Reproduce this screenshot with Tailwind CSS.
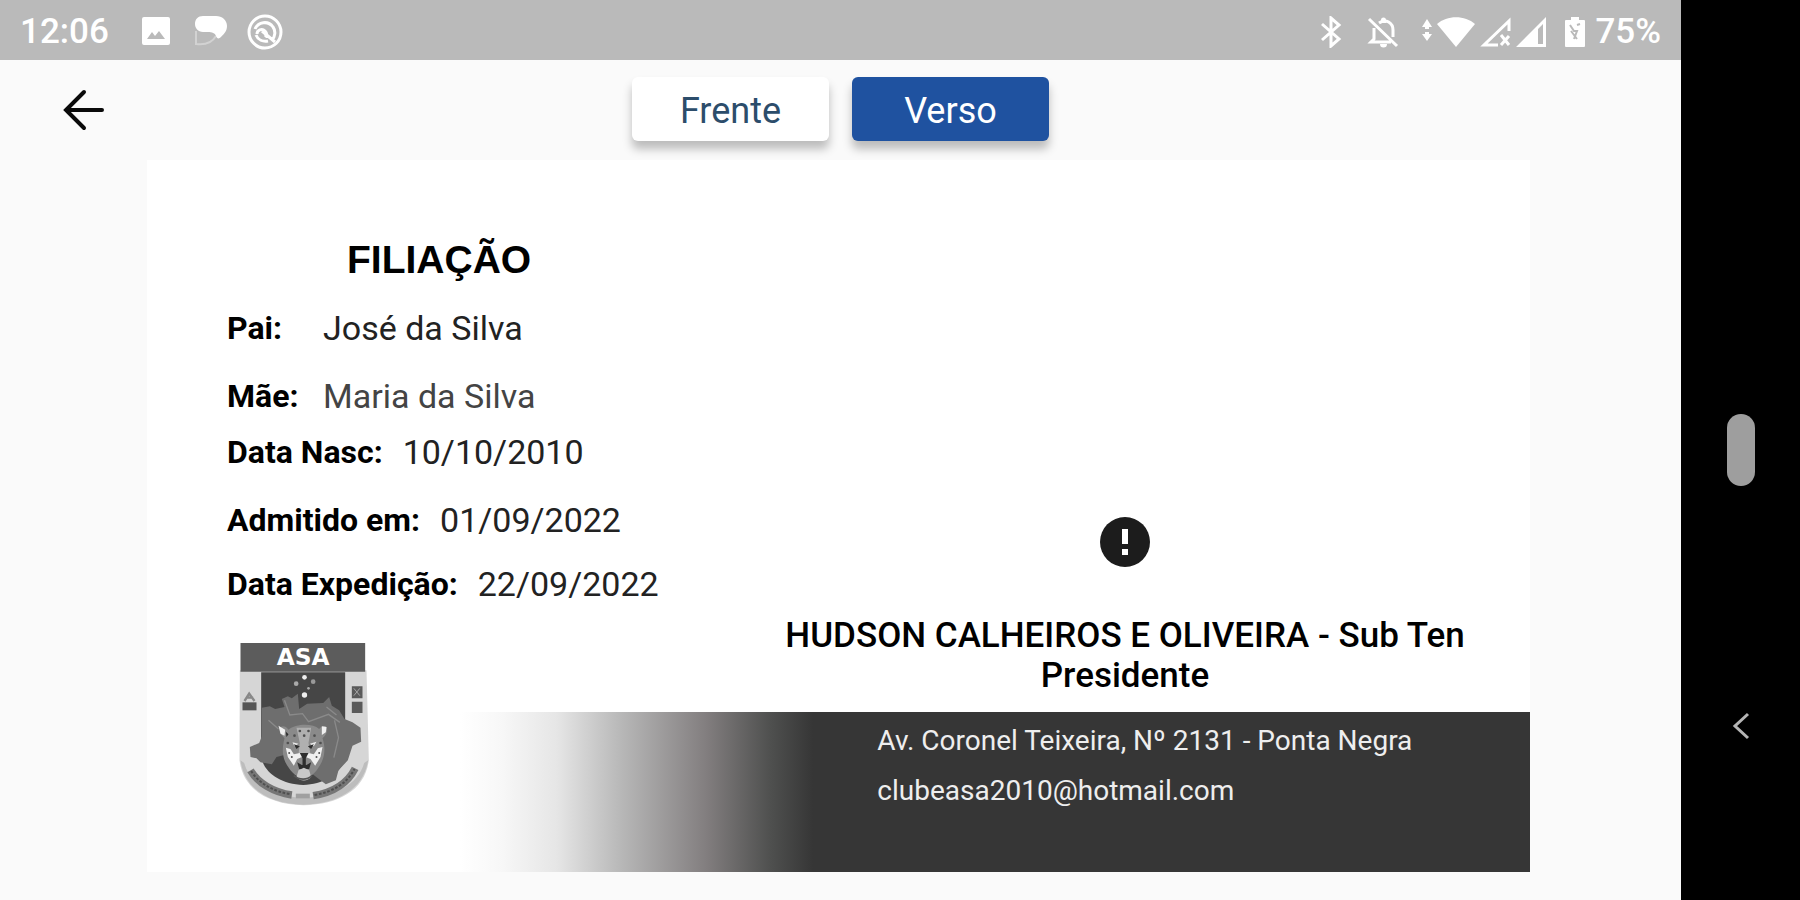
<!DOCTYPE html>
<html lang="pt-BR">
  <head>
    <meta charset="UTF-8" />
    <meta name="viewport" content="width=device-width, initial-scale=1.0" />
    <title>Carteirinha ASA</title>
    <script src="https://cdn.jsdelivr.net/npm/@tailwindcss/browser@4"></script>
  </head>
  <body class="flex min-h-screen bg-[#fafafa] font-[Roboto,sans-serif] text-black">
    <div class="flex flex-1 flex-col">
      <!-- STATUS BAR -->
      <div class="flex h-15 items-center justify-between bg-[#bababa] px-5 pt-1 text-white">
        <div class="flex items-center">
          <span class="text-[35px] leading-10 font-medium">12:06</span>
          <svg class="ml-8 h-8 w-8" viewBox="0 0 32 32" aria-hidden="true">
            <path fill="currentColor" fill-rule="evenodd" d="M3 1h24a2 2 0 0 1 2 2v24a2 2 0 0 1-2 2H3a2 2 0 0 1-2-2V3a2 2 0 0 1 2-2zM6 23h18l-6-8-4 5-3-4z" />
          </svg>
          <svg class="ml-5 h-9 w-9" viewBox="0 0 36 36" aria-hidden="true">
            <path fill="currentColor" d="M10 2h13c6 0 11 4 11 10 0 5-3 8-6 11-2 2-4 2-5-1-1-3-4-4-8-4h-5c-5 0-8-4-8-8 0-5 3-8 8-8z" />
            <path fill="none" stroke="currentColor" stroke-opacity="0.35" stroke-width="2" d="M3 17v13c8 1 16-1 20-8" />
          </svg>
          <svg class="ml-4 h-10 w-10" viewBox="0 0 40 40" fill="none" stroke="currentColor" stroke-width="3" aria-hidden="true">
            <circle cx="20" cy="20" r="16" />
            <path d="M10 17c3-7 13-9 18-2 3 4 2 10-1 13M30 30 17 19M11 23c2 5 7 7 12 6M12 22c0-4 5-6 8-3 2 2 2 4 0 6" />
          </svg>
        </div>
        <div class="flex items-center">
          <svg class="h-8 w-6" viewBox="0 0 24 32" fill="none" stroke="currentColor" stroke-width="3" aria-hidden="true">
            <path d="M3 8 20 23l-8 7V2l8 7L3 24" />
          </svg>
          <svg class="ml-6 h-8 w-8" viewBox="0 0 32 32" fill="none" stroke="currentColor" stroke-width="3" aria-hidden="true">
            <path d="M2 3 30 30M7 12v11L4 26h20M12 7c7-5 14 0 14 7v7" />
            <path fill="currentColor" stroke="none" d="M14 4a2.500 2.500 0 0 1 5 0v3h-5zM13 28h7a3.500 3.500 0 0 1-7 0z" />
          </svg>
          <svg class="ml-5 h-8 w-14" viewBox="0 0 56 32" fill="currentColor" aria-hidden="true">
            <path d="m8 3 5 8h-3v2H6v-2H3zM8 25l5-7h-3v-2H6v2H3z" />
            <path d="M18 8c10-9 28-9 38 0L37 31z" />
          </svg>
          <svg class="ml-1 h-8 w-8" viewBox="0 0 32 32" aria-hidden="true">
            <path fill="none" stroke="currentColor" stroke-width="3" d="M30 15V5L5 29h14M22 19l8 10M30 20l-8 9" />
          </svg>
          <svg class="ml-1 h-8 w-8" viewBox="0 0 32 32" aria-hidden="true">
            <path fill="currentColor" fill-rule="evenodd" d="M31 1v30H1zM28 8l-5 5v15h5z" />
          </svg>
          <svg class="ml-4 h-8 w-6" viewBox="0 0 24 32" aria-hidden="true">
            <path fill="currentColor" d="M8 1h8v3h5a1 1 0 0 1 1 1v25a1 1 0 0 1-1 1H3a1 1 0 0 1-1-1V5a1 1 0 0 1 1-1h5z" />
            <path fill="none" stroke="#bababa" stroke-width="2" d="m7 9 4 6h3l-3 8M14 9l3-1M8 15l6 8" />
          </svg>
          <span class="ml-2 text-[35px] leading-10 font-medium">75%</span>
        </div>
      </div>

      <!-- HEADER -->
      <header class="relative flex h-25 items-center justify-center gap-[23px] pb-0.5">
        <button type="button" aria-label="Voltar" class="absolute left-15 flex h-12 w-12 items-center justify-center">
          <svg class="h-12 w-12" viewBox="0 0 48 48" fill="none" stroke="#0a0a0a" stroke-width="4" stroke-linecap="round" aria-hidden="true">
            <path d="M24 7 6 25l18 18M7 25h35" />
          </svg>
        </button>
        <button type="button" class="h-16 w-[197px] rounded-md bg-white pt-1 text-4xl text-[#2c4d6b] shadow-[0_8px_10px_rgba(0,0,0,0.25)]">Frente</button>
        <button type="button" class="h-16 w-[197px] rounded-md bg-[#1f52a0] pt-1 text-4xl text-white shadow-[0_8px_10px_rgba(0,0,0,0.25)]">Verso</button>
      </header>

      <!-- CARD -->
      <main class="relative mr-[151px] mb-7 ml-[147px] grid flex-1 grid-cols-[313fr_260fr_810fr] grid-rows-[1fr_70px_160px] bg-white">
        <section class="col-span-2 pt-20 pl-20">
          <h1 class="ml-30 font-['Liberation_Sans',sans-serif] text-[39px] leading-10 font-bold">FILIAÇÃO</h1>
          <dl class="mt-7 text-[34px] leading-10">
            <div class="flex">
              <dt class="w-24 text-[32px] font-bold">Pai:</dt>
              <dd class="text-[#222]">José da Silva</dd>
            </div>
            <div class="mt-7 flex">
              <dt class="w-24 text-[32px] font-bold">Mãe:</dt>
              <dd class="text-[#444]">Maria da Silva</dd>
            </div>
            <div class="mt-4 flex gap-5">
              <dt class="text-[32px] font-bold">Data Nasc:</dt>
              <dd class="text-[#222]">10/10/2010</dd>
            </div>
            <div class="mt-7 flex gap-5">
              <dt class="text-[32px] font-bold">Admitido em:</dt>
              <dd class="text-[#222]">01/09/2022</dd>
            </div>
            <div class="mt-6 flex gap-5">
              <dt class="text-[32px] font-bold">Data Expedição:</dt>
              <dd class="text-[#222]">22/09/2022</dd>
            </div>
          </dl>
        </section>

        <section class="col-start-3 row-span-2 row-start-1 flex flex-col items-center self-end pb-4 text-center">
          <svg class="mb-12 h-[52px] w-[52px]" viewBox="0 0 52 52" role="img" aria-label="Assinatura indisponível">
            <circle cx="26" cy="26" r="25" fill="#1c1c1c" />
            <path fill="#fff" d="M23 13h6v15h-6zM23 33h6v6h-6z" />
          </svg>
          <p class="text-[35px] leading-10 font-medium whitespace-nowrap">HUDSON CALHEIROS E OLIVEIRA - Sub Ten</p>
          <p class="text-[35px] leading-10 font-medium">Presidente</p>
        </section>

        <!-- brasão -->
        <div class="col-start-1 row-span-2 row-start-2 pl-[91px]">
          <svg class="h-[165px] w-[132px]" viewBox="115 95 395 495" role="img" aria-label="Brasão ASA">
            <path fill="#d6d6d6" d="M120 180h380l7 270c-12 90-90 132-196 135-104-3-180-45-192-135z" />
            <path fill="#bdbdbd" d="M122 450c12 86 84 130 189 133 105-3 180-47 194-133l-12 8c-18 66-92 102-182 104-92-2-160-38-178-104z" />
            <path fill="#5c5c5c" d="M122 98h374v86H122z" />
            <path fill="#464646" d="M184 186h252v254c-8 46-60 82-126 84-68-2-118-38-126-84z" />
            <text x="310" y="163" text-anchor="middle" font-family="'DejaVu Sans', sans-serif" font-weight="bold" font-size="70" fill="#fff">ASA</text>
            <g fill="#eee">
              <circle cx="314" cy="201" r="7" />
              <circle cx="314" cy="254" r="8" />
              <circle cx="289" cy="220" r="7" fill="#aaa" />
              <circle cx="340" cy="214" r="7" fill="#999" />
              <circle cx="326" cy="234" r="4" fill="#aaa" />
            </g>
            <!-- mapa -->
            <path fill="#6e6e6e" d="M186 292l24-4 16 8 28-6-8-24 18-8 12 6 18-14 4 46 24-16 48-2 18-18 8 26 22 14 16 26 24 10 24 16 2 42-26 12-14 44-28 30-8 30-30 12-26-20-90-70-32 8-14 22-34-6-12-12-18-4-2-30 28-12 8-20z" />
            <path fill="none" stroke="#8a8a8a" stroke-width="4" d="M254 270l16 44 38-4 18 24 60-22 34 24M380 290l30 24M404 330l12 52-14 60M206 330l30 26" />
            <!-- onça -->
            <path fill="#8a8a8a" d="M240 356c2-12 18-10 26 2 22-18 72-20 92-2 8-12 24-12 24 0 0 14-8 22-14 28 8 24 8 48-2 70-12 24-26 44-54 54-28-10-44-30-56-54-10-22-8-46-2-70-8-8-14-16-14-28z" />
            <path fill="#b0b0b0" d="M290 352h44l-8 46 6 34h-36l4-34z" />
            <path fill="#f0f0f0" d="M236 346l20 12-2 18-12-6zM366 348l14 2-2 16-12 8zM258 412l14 4 10 16 18-4 12 6 14-6 16 4 12-18 14-4-6 30-16 26-14-20-20-8-20 8-10 20-18-26z" />
            <path fill="#eaeaea" d="M278 396l18 4-12 8zM350 394l-20 6 12 8z" />
            <path fill="#2e2e2e" d="M282 402l18 6-10 8zM342 402l-18 6 10 8zM300 428h26l-8 16v22h-10v-22zM258 364l8 8-6 8zM292 456l14 8h14l14-8-6 20h-30z" />
            <g fill="#505050">
              <circle cx="300" cy="362" r="4" />
              <circle cx="326" cy="362" r="4" />
              <circle cx="313" cy="376" r="4" />
              <circle cx="284" cy="376" r="4" />
              <circle cx="344" cy="376" r="4" />
              <circle cx="264" cy="398" r="4" />
              <circle cx="362" cy="398" r="4" />
              <circle cx="276" cy="440" r="3" />
              <circle cx="350" cy="440" r="3" />
              <circle cx="268" cy="428" r="3" />
              <circle cx="358" cy="428" r="3" />
            </g>
            <path fill="#c9c9c9" d="M296 480l16-8 16 8 6 20c-10 14-34 14-44 0z" />
            <path fill="none" stroke="#555" stroke-width="5" d="M282 496c16 14 40 14 54 0" />
            <!-- emblemas laterais -->
            <path fill="#555" d="M128 276h42v24h-42z" />
            <path fill="none" stroke="#888" stroke-width="7" d="M134 272l14-22 16 22M138 262h22" />
            <path fill="#5a5a5a" d="M456 228h32v36h-32zM456 274h32v34h-32z" />
            <path fill="none" stroke="#a5a5a5" stroke-width="3" d="M462 234l18 22M480 234l-18 22" />
            <!-- faixas -->
            <path fill="none" stroke="#767676" stroke-width="22" d="M152 480c22 38 68 66 124 74M340 556c62-10 104-38 126-82" />
            <path fill="none" stroke="#4f4f4f" stroke-width="6" stroke-dasharray="8 5" d="M154 482c22 36 66 62 120 70M344 554c58-10 98-36 120-78" />
            <path fill="#a0a0a0" d="M288 550h42v14h-42z" />
          </svg>
        </div>

        <footer class="col-span-2 col-start-2 row-start-3 bg-[linear-gradient(to_right,#fff_0%,#f7f7f7_4%,#e6e6e6_9%,#b8b8b8_15%,#827e7f_23%,#4f504f_29%,#363636_33%)] pt-1 pl-[39%] text-[28px] leading-[50px] text-[#eee]">
          <p>Av. Coronel Teixeira, Nº 2131 - Ponta Negra</p>
          <a href="mailto:clubeasa2010@hotmail.com">clubeasa2010@hotmail.com</a>
        </footer>
      </main>
    </div>

    <!-- ANDROID NAVBAR -->
    <nav class="grid w-[119px] grid-rows-[1fr_auto_1fr] justify-items-center bg-black">
      <button type="button" aria-label="Início" class="row-start-2 h-[72px] w-7 rounded-full bg-[#9e9e9e]"></button>
      <button type="button" aria-label="Voltar" class="row-start-3 mt-56 h-8 w-8">
        <svg class="h-8 w-8" viewBox="0 0 32 32" fill="none" stroke="#b5b5b5" stroke-width="3" aria-hidden="true">
          <path d="M23 4 10 16l13 12" />
        </svg>
      </button>
    </nav>
  </body>
</html>
